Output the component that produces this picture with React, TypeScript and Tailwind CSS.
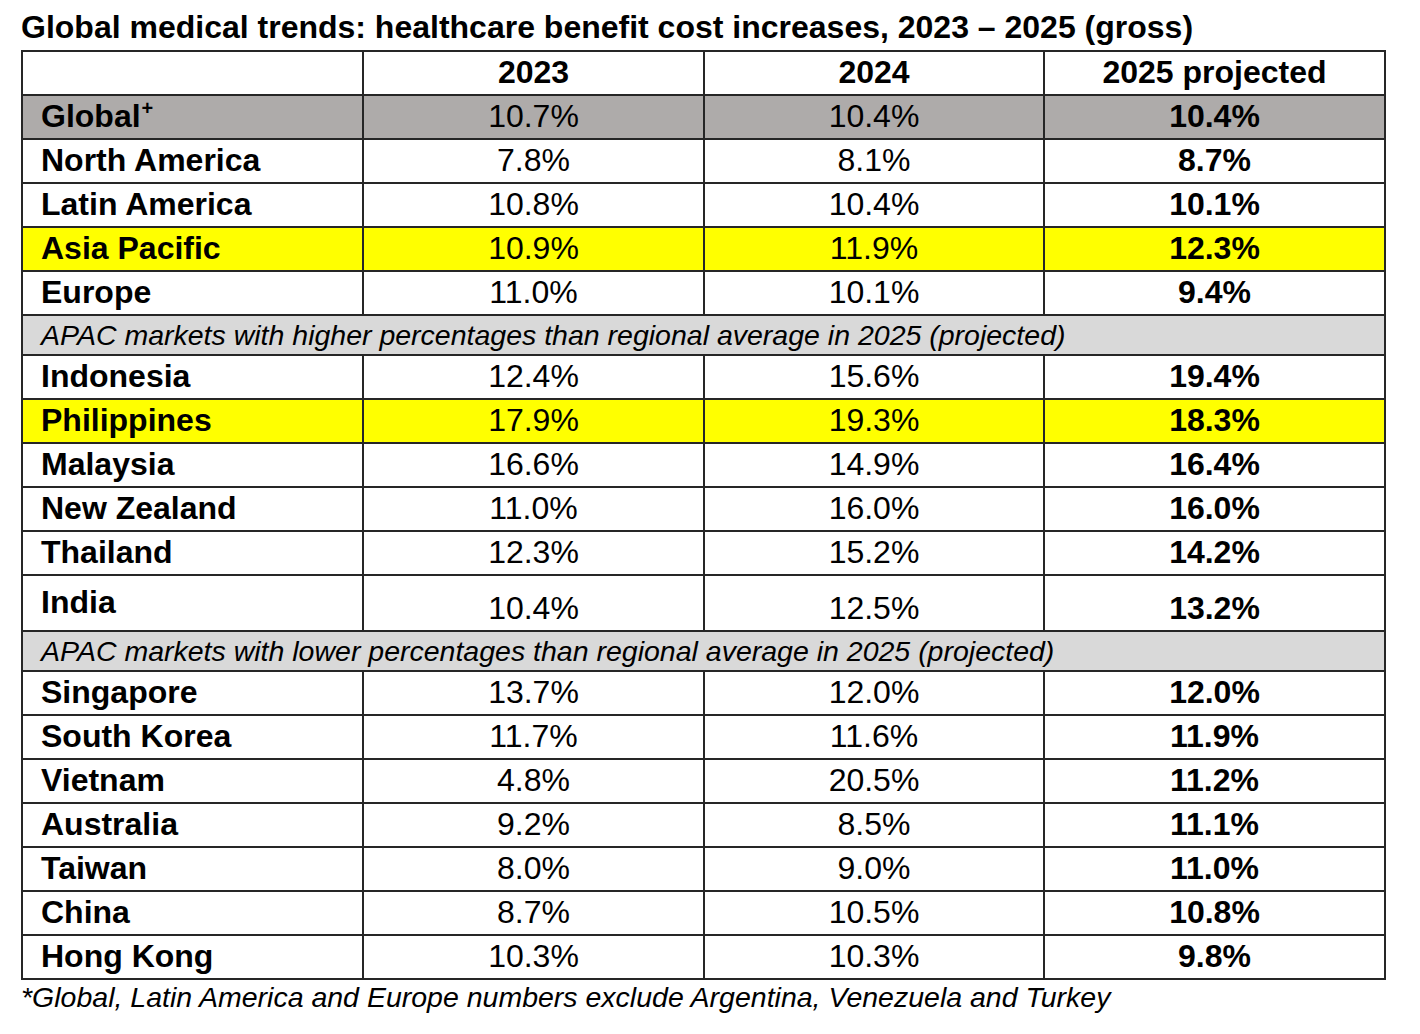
type Row = {
  label: string;
  values: [string, string, string];
  tone?: "global" | "yellow";
  tall?: boolean;
  sup?: string;
};

const topRows: Row[] = [
  { label: "Global", sup: "+", values: ["10.7%", "10.4%", "10.4%"], tone: "global" },
  { label: "North America", values: ["7.8%", "8.1%", "8.7%"] },
  { label: "Latin America", values: ["10.8%", "10.4%", "10.1%"] },
  { label: "Asia Pacific", values: ["10.9%", "11.9%", "12.3%"], tone: "yellow" },
  { label: "Europe", values: ["11.0%", "10.1%", "9.4%"] },
];

const higherRows: Row[] = [
  { label: "Indonesia", values: ["12.4%", "15.6%", "19.4%"] },
  { label: "Philippines", values: ["17.9%", "19.3%", "18.3%"], tone: "yellow" },
  { label: "Malaysia", values: ["16.6%", "14.9%", "16.4%"] },
  { label: "New Zealand", values: ["11.0%", "16.0%", "16.0%"] },
  { label: "Thailand", values: ["12.3%", "15.2%", "14.2%"] },
  { label: "India", values: ["10.4%", "12.5%", "13.2%"], tall: true },
];

const lowerRows: Row[] = [
  { label: "Singapore", values: ["13.7%", "12.0%", "12.0%"] },
  { label: "South Korea", values: ["11.7%", "11.6%", "11.9%"] },
  { label: "Vietnam", values: ["4.8%", "20.5%", "11.2%"] },
  { label: "Australia", values: ["9.2%", "8.5%", "11.1%"] },
  { label: "Taiwan", values: ["8.0%", "9.0%", "11.0%"] },
  { label: "China", values: ["8.7%", "10.5%", "10.8%"] },
  { label: "Hong Kong", values: ["10.3%", "10.3%", "9.8%"] },
];

const cell = "border-2 border-[#262626] p-0";

function DataRow({ row }: { row: Row }) {
  const bg =
    row.tone === "global" ? "bg-[#aeabaa]" : row.tone === "yellow" ? "bg-[#ffff00]" : "bg-white";

  if (row.tall) {
    return (
      <tr className={`h-[56px] ${bg}`}>
        <td className={`${cell} pl-[18px] align-top pt-[8px] font-bold`}>{row.label}</td>
        {row.values.map((v, i) => (
          <td key={i} className={`${cell} text-center align-bottom pb-[4px] ${i === 2 ? "font-bold" : ""}`}>
            {v}
          </td>
        ))}
      </tr>
    );
  }

  return (
    <tr className={`h-[44px] ${bg}`}>
      <td className={`${cell} pl-[18px] pb-[2px] font-bold`}>
        {row.label}
        {row.sup && <sup className="text-[20px] -top-[12px] ml-[1px]">{row.sup}</sup>}
      </td>
      {row.values.map((v, i) => (
        <td key={i} className={`${cell} text-center pb-[2px] ${i === 2 ? "font-bold" : ""}`}>
          {v}
        </td>
      ))}
    </tr>
  );
}

function SectionRow({ text }: { text: string }) {
  return (
    <tr className="h-[40px] bg-[#d9d9d9]">
      <td colSpan={4} className={`${cell} pl-[18px] italic text-[28.5px] leading-[32px]`}>
        {text}
      </td>
    </tr>
  );
}

export default function App() {
  return (
    <div
      className="w-[1420px] h-[1034px] bg-white text-black pl-[21px] pt-[9px]"
      style={{ fontFamily: '"Liberation Sans", Arial, sans-serif' }}
    >
      <h1 className="text-[32px] leading-[36px] font-bold">
        Global medical trends: healthcare benefit cost increases, 2023 – 2025 (gross)
      </h1>

      <table className="mt-[5px] w-[1364px] table-fixed border-collapse text-[32px] leading-[36px]">
        <colgroup>
          <col className="w-[341px]" />
          <col className="w-[341px]" />
          <col className="w-[340px]" />
          <col className="w-[341px]" />
        </colgroup>
        <thead>
          <tr className="h-[44px] bg-white">
            <th className={cell}></th>
            <th className={`${cell} text-center font-bold pb-[2px]`}>2023</th>
            <th className={`${cell} text-center font-bold pb-[2px]`}>2024</th>
            <th className={`${cell} text-center font-bold pb-[2px]`}>2025 projected</th>
          </tr>
        </thead>
        <tbody>
          {topRows.map((r) => (
            <DataRow key={r.label} row={r} />
          ))}
          <SectionRow text="APAC markets with higher percentages than regional average in 2025 (projected)" />
          {higherRows.map((r) => (
            <DataRow key={r.label} row={r} />
          ))}
          <SectionRow text="APAC markets with lower percentages than regional average in 2025 (projected)" />
          {lowerRows.map((r) => (
            <DataRow key={r.label} row={r} />
          ))}
        </tbody>
      </table>

      <p className="italic text-[28.5px] leading-[32px] mt-[1px]">
        *Global, Latin America and Europe numbers exclude Argentina, Venezuela and Turkey
      </p>
    </div>
  );
}
